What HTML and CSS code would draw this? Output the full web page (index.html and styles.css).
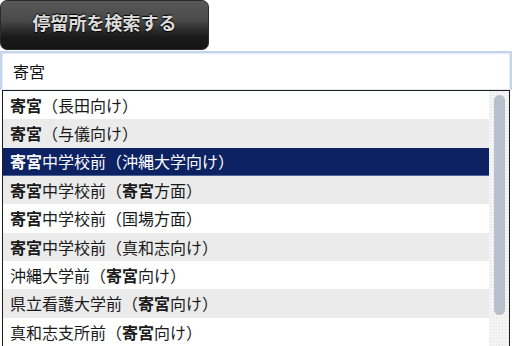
FILE: index.html
```html
<!DOCTYPE html>
<html lang="ja">
<head>
<meta charset="utf-8">
<link rel="stylesheet" href="styles.css">
</head>
<body>
<div class="page">
  <button class="search-btn">停留所を検索する</button>
  <div class="field">寄宮</div>
  <div class="dropdown">
    <ul class="list">
      <li class="row"><b>寄宮</b>（長田向け）</li>
      <li class="row alt"><b>寄宮</b>（与儀向け）</li>
      <li class="row sel"><b>寄宮</b>中学校前（沖縄大学向け）</li>
      <li class="row alt"><b>寄宮</b>中学校前（<b>寄宮</b>方面）</li>
      <li class="row"><b>寄宮</b>中学校前（国場方面）</li>
      <li class="row alt"><b>寄宮</b>中学校前（真和志向け）</li>
      <li class="row">沖縄大学前（<b>寄宮</b>向け）</li>
      <li class="row alt">県立看護大学前（<b>寄宮</b>向け）</li>
      <li class="row">真和志支所前（<b>寄宮</b>向け）</li>
    </ul>
    <div class="scroll"><div class="thumb"></div></div>
  </div>
</div>
</body>
</html>
```
FILE: styles.css
```css
* { box-sizing: border-box; }
html, body { margin: 0; padding: 0; background: #fff; }
body { font-family: "Noto Sans CJK JP", "Noto Sans", sans-serif; width: 512px; height: 346px; overflow: hidden; }
.page { display: flex; flex-direction: column; align-items: flex-start; }
.search-btn {
  width: 209px; height: 50px; margin: 0;
  border: 1px solid #2a2a2a; border-radius: 7px;
  background: linear-gradient(#585858 0%, #4a4a4a 40%, #2a2a2a 62%, #1a1a1a 75%, #151515 100%);
  color: #dcdcdc; font-family: inherit; font-size: 18px; font-weight: bold;
  text-shadow: 0 -1px 1px #000, 0 1px 1px #000;
  padding: 0 0 6px 0; letter-spacing: 0;
}
.field {
  width: 512px; height: 39px; margin-top: 1px;
  border: 2px solid #c4d4ea; border-bottom: none;
  box-shadow: inset 0 0 0 1px #e4ebf5;
  padding: 6px 0 0 11px; font-size: 16px; color: #111; line-height: 24px;
}
.dropdown {
  margin-left: 2px; width: 508px; height: 257px;
  border: 1px solid #1c1c1c; display: flex; background: #fff;
}
.list { list-style: none; margin: 0; padding: 0; flex: 1; }
.row {
  height: 28.33px; padding-left: 7px; font-size: 16px; line-height: 28px;
  color: #1a1a1a; white-space: nowrap;
}
.row b { font-weight: bold; }
.row.alt { background: #ebebeb; }
.row.sel { background: #0c2262; color: #fff; border-bottom: 1px solid #4d6597; line-height: 27px; }
.scroll {
  width: 20px; padding: 4px 0 0 5px;
  background-color: #f4f4f4;
  background-image: radial-gradient(#e2e2e2 0.6px, transparent 0.8px);
  background-size: 3px 3px;
}
.thumb { width: 11px; height: 220px; border-radius: 6px; background: #b8c0cc; }
```
